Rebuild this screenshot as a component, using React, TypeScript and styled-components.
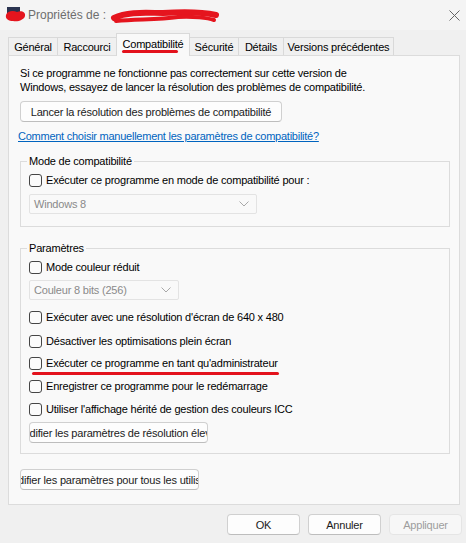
import React from "react";
import styled, { createGlobalStyle } from "styled-components";

const GlobalStyle = createGlobalStyle`
  html, body {
    margin: 0;
    padding: 0;
    background: #f0f0f0;
  }
  body {
    font-family: "Liberation Sans", Arial, sans-serif;
    font-size: 11px;
    color: #000;
  }
`;

const Window = styled.div`
  width: 466px;
  height: 543px;
  display: flex;
  flex-direction: column;
  background: #f0f0f0;
  overflow: hidden;
`;

const TitleBar = styled.div`
  height: 30px;
  flex-shrink: 0;
  display: flex;
  align-items: center;
  justify-content: space-between;
  padding: 0 6px 0 5px;
  background: #f4f4f4;
`;

const TitleLeft = styled.div`
  display: flex;
  align-items: center;
  color: #6e6e6e;
  font-size: 12px;
`;

const TitleText = styled.span`
  margin-left: 1px;
  white-space: pre;
`;

const Redacted = styled.span`
  position: relative;
  display: inline-block;
  width: 108px;
  height: 16px;
`;

const RedactedMark = styled.svg`
  position: absolute;
  left: -1px;
  top: -3px;
`;

const TabStrip = styled.div`
  height: 25px;
  flex-shrink: 0;
  display: flex;
  align-items: flex-end;
  padding-left: 8px;
`;

const Tab = styled.div<{ $w: number; $active?: boolean }>`
  position: relative;
  box-sizing: border-box;
  width: ${(p) => p.$w}px;
  height: ${(p) => (p.$active ? 23 : 18)}px;
  margin-left: -1px;
  margin-bottom: ${(p) => (p.$active ? -1 : 0)}px;
  z-index: ${(p) => (p.$active ? 1 : 0)};
  border: 1px solid #d9d9d9;
  border-bottom: none;
  background: ${(p) => (p.$active ? "#f9f9f9" : "#f0f0f0")};
  display: flex;
  align-items: center;
  justify-content: center;
  padding-bottom: ${(p) => (p.$active ? 3 : 0)}px;
  white-space: nowrap;
  letter-spacing: -0.2px;

  &:first-child {
    margin-left: 0;
  }
`;

const Underline = styled.span<{ $left: number; $top: number; $w: number }>`
  position: absolute;
  left: ${(p) => p.$left}px;
  top: ${(p) => p.$top}px;
  width: ${(p) => p.$w}px;
  height: 3px;
  border-radius: 2px;
  background: #e3121c;
  pointer-events: none;
`;

const Panel = styled.div`
  box-sizing: border-box;
  margin-left: 8px;
  width: 452px;
  height: 450px;
  flex-shrink: 0;
  border: 1px solid #dcdcdc;
  background: #f9f9f9;
  padding: 10px 10px 0 11px;
  display: flex;
  flex-direction: column;
  align-items: flex-start;
`;

const Intro = styled.p`
  margin: 0;
  line-height: 14px;
  letter-spacing: -0.2px;
`;

const PushButton = styled.button<{ $w: number; $mt?: number; $disabled?: boolean }>`
  box-sizing: border-box;
  width: ${(p) => p.$w}px;
  height: 21px;
  margin-top: ${(p) => p.$mt ?? 0}px;
  padding: 0;
  border: 1px solid ${(p) => (p.$disabled ? "#e5e5e5" : "#d0d0d0")};
  border-bottom-color: ${(p) => (p.$disabled ? "#e5e5e5" : "#bdbdbd")};
  border-radius: 4px;
  background: ${(p) => (p.$disabled ? "#f7f7f7" : "#fdfdfd")};
  color: ${(p) => (p.$disabled ? "#9d9d9d" : "#1b1b1b")};
  font: inherit;
  letter-spacing: -0.2px;
  display: flex;
  align-items: center;
  justify-content: center;
  overflow: hidden;
  white-space: nowrap;
`;

const ButtonLabel = styled.span<{ $shift?: number }>`
  flex-shrink: 0;
  margin-left: ${(p) => p.$shift ?? 0}px;
`;

const HelpLink = styled.a`
  margin: 7px 0 0 -2px;
  line-height: 14px;
  color: #0064bf;
  text-decoration: underline;
  letter-spacing: -0.25px;
  cursor: pointer;
`;

const Group = styled.fieldset<{ $mt: number; $pb: number }>`
  box-sizing: border-box;
  width: 430px;
  min-width: 0;
  margin: ${(p) => p.$mt}px 0 0 0;
  padding: 4px 8px ${(p) => p.$pb}px 8px;
  border: 1px solid #dcdcdc;
  display: flex;
  flex-direction: column;
  align-items: flex-start;
`;

const GroupTitle = styled.legend`
  padding: 0 2px;
  margin-left: -2px;
  line-height: 14px;
  letter-spacing: -0.2px;
`;

const CheckRow = styled.label<{ $mt?: number }>`
  position: relative;
  display: flex;
  align-items: center;
  height: 16px;
  margin-top: ${(p) => p.$mt ?? 0}px;
  white-space: nowrap;
  letter-spacing: -0.2px;
`;

const Box = styled.span`
  box-sizing: border-box;
  width: 13px;
  height: 13px;
  border: 1px solid #454545;
  border-radius: 3px;
  background: #fbfbfb;
  margin-right: 4px;
  flex-shrink: 0;
`;

const Select = styled.div<{ $w: number; $mt: number }>`
  box-sizing: border-box;
  width: ${(p) => p.$w}px;
  height: 20px;
  margin-top: ${(p) => p.$mt}px;
  border: 1px solid #e3e3e3;
  border-radius: 2px;
  background: #f9f9f9;
  color: #8a8a8a;
  display: flex;
  align-items: center;
  justify-content: space-between;
  padding: 0 7px 0 4px;
  letter-spacing: -0.2px;
`;

const Footer = styled.div`
  display: flex;
  justify-content: flex-end;
  gap: 8px;
  padding: 9px 4px 0 0;
`;

const Chevron = () => (
  <svg width="10" height="6" viewBox="0 0 10 6">
    <polyline points="0.5,0.5 5,5 9.5,0.5" fill="none" stroke="#a8a8a8" strokeWidth="1" />
  </svg>
);

const Check = ({ label, mt, children }: { label: string; mt?: number; children?: React.ReactNode }) => (
  <CheckRow $mt={mt}>
    <Box />
    {label}
    {children}
  </CheckRow>
);

const tabs = [
  { label: "Général", w: 50 },
  { label: "Raccourci", w: 60 },
  { label: "Compatibilité", w: 74, active: true },
  { label: "Sécurité", w: 50 },
  { label: "Détails", w: 46 },
  { label: "Versions précédentes", w: 111 },
];

export default function App() {
  return (
    <>
      <GlobalStyle />
      <Window>
        <TitleBar>
          <TitleLeft>
            <svg width="22" height="18" viewBox="0 0 22 18">
              <rect x="2" y="1" width="13" height="8" fill="#2a3350" />
              <path
                d="M1 9 C2 5 8 4 12 6 C16 4 21 6 20 10 C19 14 13 16 8 15 C4 15 0 13 1 9 Z"
                fill="#e5151e"
              />
            </svg>
            <TitleText>Propriétés de : </TitleText>
            <Redacted>
              <RedactedMark width="120" height="24" viewBox="0 0 120 24">
                <path
                  d="M6 14 C20 7 40 9 55 9 C70 8 90 7 108 11"
                  fill="none"
                  stroke="#e5151e"
                  strokeWidth="6"
                  strokeLinecap="round"
                />
                <path
                  d="M8 17 C30 15 50 16 70 13 C85 12 100 14 106 16"
                  fill="none"
                  stroke="#e5151e"
                  strokeWidth="4"
                  strokeLinecap="round"
                />
              </RedactedMark>
            </Redacted>
          </TitleLeft>
          <svg width="11" height="11" viewBox="0 0 11 11">
            <path d="M0.5 0.5 L10.5 10.5 M10.5 0.5 L0.5 10.5" stroke="#666" strokeWidth="1" />
          </svg>
        </TitleBar>

        <TabStrip>
          {tabs.map((t) => (
            <Tab key={t.label} $w={t.w} $active={t.active}>
              {t.label}
              {t.active && <Underline $left={5} $top={16} $w={56} />}
            </Tab>
          ))}
        </TabStrip>

        <Panel>
          <Intro>
            Si ce programme ne fonctionne pas correctement sur cette version de
            <br />
            Windows, essayez de lancer la résolution des problèmes de compatibilité.
          </Intro>
          <PushButton $w={262} $mt={7}>
            <ButtonLabel>Lancer la résolution des problèmes de compatibilité</ButtonLabel>
          </PushButton>
          <HelpLink>Comment choisir manuellement les paramètres de compatibilité?</HelpLink>

          <Group $mt={11} $pb={12}>
            <GroupTitle>Mode de compatibilité</GroupTitle>
            <Check label="Exécuter ce programme en mode de compatibilité pour :" />
            <Select $w={228} $mt={6}>
              <span>Windows 8</span>
              <Chevron />
            </Select>
          </Group>

          <Group $mt={14} $pb={10}>
            <GroupTitle>Paramètres</GroupTitle>
            <Check label="Mode couleur réduit" />
            <Select $w={150} $mt={5}>
              <span>Couleur 8 bits (256)</span>
              <Chevron />
            </Select>
            <Check label="Exécuter avec une résolution d'écran de 640 x 480" mt={9} />
            <Check label="Désactiver les optimisations plein écran" mt={8} />
            <Check label="Exécuter ce programme en tant qu'administrateur" mt={6}>
              <Underline $left={3} $top={17} $w={247} />
            </Check>
            <Check label="Enregistrer ce programme pour le redémarrage" mt={7} />
            <Check label="Utiliser l'affichage hérité de gestion des couleurs ICC" mt={7} />
            <PushButton $w={179} $mt={5}>
              <ButtonLabel>Modifier les paramètres de résolution élevée</ButtonLabel>
            </PushButton>
          </Group>

          <PushButton $w={179} $mt={15}>
            <ButtonLabel $shift={14}>Modifier les paramètres pour tous les utilisateurs</ButtonLabel>
          </PushButton>
        </Panel>

        <Footer>
          <PushButton $w={73}>OK</PushButton>
          <PushButton $w={73}>Annuler</PushButton>
          <PushButton $w={73} $disabled>
            Appliquer
          </PushButton>
        </Footer>
      </Window>
    </>
  );
}
